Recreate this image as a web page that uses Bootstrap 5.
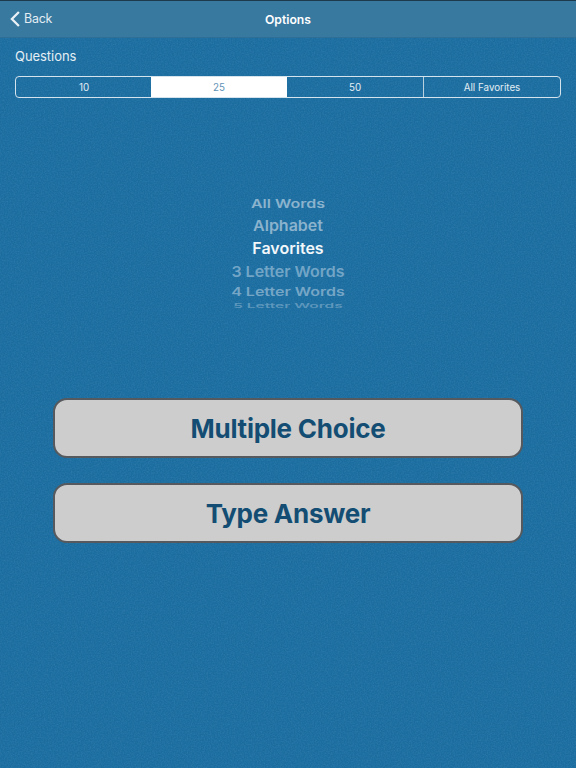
<!DOCTYPE html>
<html lang="en">
<head>
<meta charset="utf-8">
<title>Options</title>
<link rel="stylesheet" href="https://cdn.jsdelivr.net/npm/bootstrap@5.3.0/dist/css/bootstrap.min.css">
<style>
html,body{height:100%}
body{
  font-family:Inter,"Liberation Sans",sans-serif;
  background-color:#1b6da0;
  background-image:url("data:image/svg+xml,%3Csvg xmlns='http://www.w3.org/2000/svg' width='300' height='300'%3E%3Cfilter id='n'%3E%3CfeTurbulence type='fractalNoise' baseFrequency='.7' numOctaves='2' seed='4'/%3E%3CfeColorMatrix values='0 0 0 0 .45 0 0 0 0 .65 0 0 0 0 .85 .9 0 0 0 -.33'/%3E%3C/filter%3E%3Crect width='300' height='300' filter='url(%23n)' opacity='.22'/%3E%3C/svg%3E");
  color:#fff;
  overflow:hidden;
}
.top-bar{height:38px;background:#38799f;border-top:1px solid #1d3a4c;border-bottom:1px solid #2f6f97;position:relative}
.back-link{color:#e3edf3;font-size:12.4px;letter-spacing:-.2px;text-decoration:none;padding-left:10px;gap:4px;line-height:18px}
.bar-title{font-size:12.2px;font-weight:600;color:#fff;position:absolute;left:0;right:0;top:10px;text-align:center;margin:0;line-height:18px}
.q-label{font-size:13px;line-height:18px;color:#e4eef4;margin:9px 0 11px 15px;letter-spacing:-.05px}
.seg{margin:0 15px;height:22px;border:1px solid #d5e3ec;border-radius:4px;overflow:hidden}
.seg-item{flex:1 1 0;font-size:9.8px;color:#e4eef4;text-align:center;line-height:21px;border-left:1px solid #b9d0df}
.seg-item:first-child{border-left:0}
.seg-item.on{background:#fff;color:#5f94b6;border-left:0;margin-left:-1px}
.seg-item.on + .seg-item{border-left:0}
.picker{height:116px;margin-top:99px}
.pick{font-weight:600;font-size:16px;text-align:center;white-space:nowrap;color:#83aecb}
.p1{height:14px;line-height:14px;transform:scaleY(.72);color:#8bb3cd}
.p2{height:28px;line-height:28px;transform:scaleY(.94);color:#8bb3cd}
.p3{height:18px;line-height:18px;color:#f2f7fa}
.p4{height:28px;line-height:28px;transform:scaleY(.94);color:#72a5c6}
.p5{height:14px;line-height:14px;transform:scaleY(.72);color:#76a6c6}
.p6{height:14px;line-height:14px;font-size:15.5px;transform:scaleY(.42);color:#5e97bc}
.choices{margin:85px 53px 0;gap:25px}
.choice-btn{height:60px;border:2px solid #565a5e;border-radius:14px;background:#cdcdcd;color:#134d73;font-size:26px;font-weight:700;padding:1px 0 0;line-height:1;letter-spacing:-.25px}
.choice-btn:hover{background:#cdcdcd;color:#134d73;border-color:#565a5e}
</style>
</head>
<body>
<div class="top-bar d-flex align-items-center">
  <a href="#" class="back-link d-flex align-items-center">
    <svg width="10" height="16" viewBox="0 0 10 16" aria-hidden="true"><path d="M8.9 1 1.9 8l7 7" fill="none" stroke="#eaf1f6" stroke-width="2.3"/></svg>
    <span>Back</span>
  </a>
  <p class="bar-title">Options</p>
</div>
<div class="q-label">Questions</div>
<div class="seg d-flex">
  <div class="seg-item">10</div>
  <div class="seg-item on">25</div>
  <div class="seg-item">50</div>
  <div class="seg-item">All Favorites</div>
</div>
<div class="picker">
  <div class="pick p1">All Words</div>
  <div class="pick p2">Alphabet</div>
  <div class="pick p3">Favorites</div>
  <div class="pick p4">3 Letter Words</div>
  <div class="pick p5">4 Letter Words</div>
  <div class="pick p6">5 Letter Words</div>
</div>
<div class="choices d-flex flex-column">
  <button type="button" class="btn choice-btn">Multiple Choice</button>
  <button type="button" class="btn choice-btn">Type Answer</button>
</div>
<script src="https://cdn.jsdelivr.net/npm/bootstrap@5.3.0/dist/js/bootstrap.bundle.min.js"></script>
</body>
</html>
